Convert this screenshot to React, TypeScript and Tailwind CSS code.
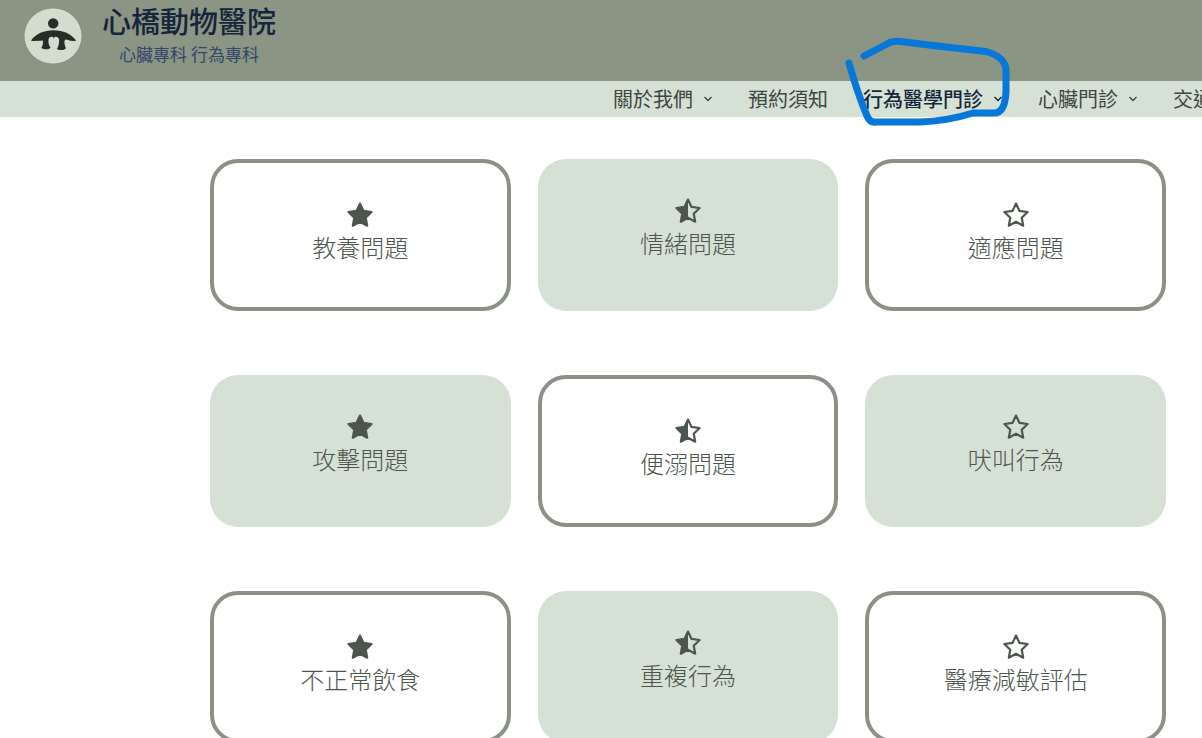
import clsx from "clsx";

const navItems = [
  { label: "關於我們", hasMenu: true },
  { label: "預約須知" },
  { label: "行為醫學門診", hasMenu: true, active: true },
  { label: "心臟門診", hasMenu: true },
  { label: "交通資訊" },
];

const topics = [
  "教養問題",
  "情緒問題",
  "適應問題",
  "攻擊問題",
  "便溺問題",
  "吠叫行為",
  "不正常飲食",
  "重複行為",
  "醫療減敏評估",
];

function Logo() {
  return (
    <svg viewBox="0 0 58 56" className="w-[58px] h-[56px] shrink-0" aria-hidden="true">
      <ellipse cx="29" cy="28" rx="28.5" ry="27.5" fill="#d2ddce" />
      <g fill="#272e27">
        <circle cx="29.2" cy="15.4" r="5.2" />
        <path d="M7 32.500C12 25.500 20 22.200 29.500 22.200S47 25.500 52 32.500C50 33.800 48 32 46.500 33C45 32 43 32 41.200 31.600C39.500 34.500 41 38 42 40.200C40 42.600 35 42.600 33 41C34.500 38 35.600 34.500 35 31.200C34.400 28.600 31.200 27.800 29.800 30.200C28.400 27.800 25 28.600 24.600 31.200C24 34.500 25 37.500 26.600 39.800C24.500 41.800 20 41.800 17.300 40C19 37.500 19.600 34 18.400 32C17 33.500 15.500 32.200 14 33.200C12.500 32 9.500 34 7 32.500Z" />
      </g>
    </svg>
  );
}

const STAR = "M14 2.6L17.5 9.9L25.6 11L19.7 16.7L21.2 24.7L14 20.8L6.8 24.7L8.3 16.7L2.4 11L10.5 9.9Z";

// column 0 is full, 1 half, 2 empty
function Star({ column }: { column: number }) {
  return (
    <svg
      viewBox="0 0 28 28"
      className="w-7 h-7"
      fill={column === 0 ? "currentColor" : "none"}
      stroke="currentColor"
      strokeWidth="2.2"
      strokeLinejoin="round"
      aria-hidden="true"
    >
      <path d={STAR} />
      {column === 1 && (
        <path d="M14 2.6V20.8L6.8 24.7L8.3 16.7L2.4 11L10.5 9.9Z" fill="currentColor" stroke="none" />
      )}
    </svg>
  );
}

function Chevron() {
  return (
    <svg viewBox="0 0 10 6" className="w-[10px] h-[6px] ml-[10px]" fill="none" stroke="currentColor" strokeWidth="1.4" aria-hidden="true">
      <path d="M1.500 1l3.500 3.500L8.500 1" />
    </svg>
  );
}

// hand drawn circle around the active menu entry
function Scribble() {
  return (
    <svg
      viewBox="0 0 170 94"
      className="absolute -left-5 -top-12 w-[170px] h-[94px] max-w-none pointer-events-none"
      fill="none"
      stroke="#0777d8"
      strokeWidth="7"
      strokeLinecap="round"
      strokeLinejoin="round"
      aria-hidden="true"
    >
      <path d="M21 23L45 10.500Q50 7 62 9L90 12.500L143 18.500Q163 24 163 38V59Q162 80 151 80L130 80Q105 88 76 89H33Q27 90 24 83Q14 59 6 30" />
    </svg>
  );
}

export default function App() {
  return (
    <div className="min-h-screen overflow-hidden bg-white font-['Noto_Sans_CJK_TC',sans-serif]">
      <header>
        <div className="flex h-[81px] items-start gap-5 bg-[#8a9584] px-6">
          <div className="pt-2">
            <Logo />
          </div>
          <div className="flex flex-col items-center">
            <h1 className="text-[29px] leading-10 font-medium text-[#14253c]">心橋動物醫院</h1>
            <p className="text-[17px] leading-7 text-[#33466a]">心臟專科 行為專科</p>
          </div>
        </div>
        <nav className="flex h-9 items-center gap-[35px] bg-[#d6e1d6] pl-[51%] whitespace-nowrap">
          {navItems.map((item) => (
            <a
              key={item.label}
              href="#"
              className={clsx(
                "relative flex shrink-0 items-center text-xl leading-9",
                item.active ? "font-medium text-[#14253c]" : "text-[#3d463f]"
              )}
            >
              {item.label}
              {item.hasMenu && <Chevron />}
              {item.active && <Scribble />}
            </a>
          ))}
        </nav>
      </header>
      <main className="grid grid-cols-3 gap-x-[27px] gap-y-16 pt-[42px] pl-[210px] pr-9">
        {topics.map((topic, i) => (
          <section
            key={topic}
            className={clsx(
              "flex h-[152px] flex-col items-center rounded-[28px] pt-[38px] text-[#4c564d]",
              i % 2 === 0 ? "border-4 border-[#8a9186]" : "bg-[#d6e1d6]"
            )}
          >
            <Star column={i % 3} />
            <h2 className="mt-0.5 text-2xl leading-8 font-light">{topic}</h2>
          </section>
        ))}
      </main>
    </div>
  );
}
